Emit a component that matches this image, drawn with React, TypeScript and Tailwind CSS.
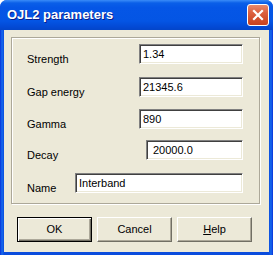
import React from "react";

function Field({ value, width, indent = "pl-[3px]" }: { value: string; width: string; indent?: string }) {
  return (
    <div
      className={`${width} h-[20px] bg-white border border-t-[#808080] border-l-[#808080] border-r-white border-b-white shadow-[inset_1px_1px_0_#404040,inset_-1px_-1px_0_#ece9d8] flex items-center ${indent} text-[11px] leading-[13px] text-black`}
    >
      {value}
    </div>
  );
}

function Row({ label, labelWidth, children, top }: { label: string; labelWidth: string; children: React.ReactNode; top: string }) {
  return (
    <div className={`flex items-start h-[20px] ${top}`}>
      <span className={`${labelWidth} mt-[9px] text-[11px] leading-[13px] text-black`}>{label}</span>
      {children}
    </div>
  );
}

function Button({ children, isDefault = false }: { children: React.ReactNode; isDefault?: boolean }) {
  return (
    <button
      className={`w-[75px] h-[25px] bg-[#ece9d8] text-[11px] leading-[13px] text-black flex items-center justify-center ${
        isDefault
          ? "border border-black shadow-[inset_1px_1px_0_#ffffff,inset_-1px_-1px_0_#716f64,inset_-2px_-2px_0_#aca899]"
          : "border border-t-white border-l-white border-r-[#716f64] border-b-[#716f64] shadow-[inset_-1px_-1px_0_#aca899]"
      }`}
    >
      {children}
    </button>
  );
}

export default function App() {
  return (
    <div className="w-[273px] h-[255px] flex flex-col rounded-t-[7px] overflow-hidden bg-[linear-gradient(to_right,#0831d9_0px,#166aee_2px,#0a4cdd_4px,#0a4cdd_269px,#166aee_271px,#0831d9_273px)] font-['Liberation_Sans',Arial,sans-serif]">
      {/* Title bar */}
      <div className="h-[30px] flex items-center pl-[7px] pr-[4px] bg-[linear-gradient(to_bottom,#3a8cf8_0%,#0a5fe8_10%,#0556e6_25%,#0455e4_70%,#0349d4_90%,#0345c8_100%)]">
        <span className="text-white font-bold text-[13px] leading-[16px] [text-shadow:1px_1px_0_#0a1e8a]">
          OJL2 parameters
        </span>
        <div className="ml-auto w-[22px] h-[22px] rounded-[3px] border border-white bg-[linear-gradient(to_bottom,#e88a6c_0%,#dd6343_35%,#d2502d_70%,#c8411f_100%)] flex items-center justify-center">
          <svg width="12" height="12" viewBox="0 0 12 12">
            <path d="M2 2 L10 10 M10 2 L2 10" stroke="white" strokeWidth="2.2" strokeLinecap="square" />
          </svg>
        </div>
      </div>

      {/* Client area */}
      <div className="flex-1 mx-[4px] mb-[3px] bg-[#ece9d8] flex flex-col">
        {/* Group box */}
        <div className="mt-[7px] ml-[7px] w-[249px] h-[167px] border border-[#aca899] shadow-[inset_1px_1px_0_#ffffff,1px_1px_0_#ffffff] flex flex-col pl-[15px] pt-[6px]">
          <Row label="Strength" labelWidth="w-[112px]" top="">
            <Field value="1.34" width="w-[104px]" />
          </Row>
          <Row label="Gap energy" labelWidth="w-[112px]" top="mt-[13px]">
            <Field value="21345.6" width="w-[104px]" />
          </Row>
          <Row label="Gamma" labelWidth="w-[112px]" top="mt-[12px]">
            <Field value="890" width="w-[104px]" />
          </Row>
          <Row label="Decay" labelWidth="w-[119px]" top="mt-[11px]">
            <Field value="20000.0" width="w-[97px]" indent="pl-[6px]" />
          </Row>
          <Row label="Name" labelWidth="w-[48px]" top="mt-[13px]">
            <Field value="Interband" width="w-[168px]" />
          </Row>
        </div>

        {/* Buttons */}
        <div className="mt-[13px] ml-[13px] flex gap-[5px]">
          <Button isDefault>OK</Button>
          <Button>Cancel</Button>
          <Button>
            <span>
              <span className="underline">H</span>elp
            </span>
          </Button>
        </div>
      </div>
    </div>
  );
}
